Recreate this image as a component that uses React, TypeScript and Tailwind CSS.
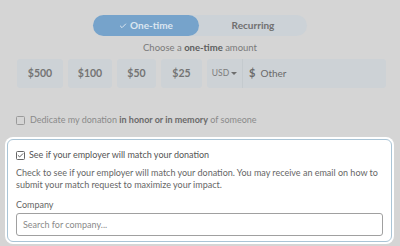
import { Check } from "lucide-react";

const amounts = [
  { label: "$500", w: "w-[46px]" },
  { label: "$100", w: "w-[44px]" },
  { label: "$50", w: "w-[39px]" },
  { label: "$25", w: "w-[41px]" },
];

export default function App() {
  return (
    <div className="w-[400px] h-[246px] overflow-hidden bg-[#d5d5d5] font-['Lato',sans-serif] text-[#6e6e6e]">
      {/* frequency toggle */}
      <div className="flex justify-center pt-[15px]">
        <div className="flex h-[21px] w-[214px] rounded-full bg-[#ccd2d7]">
          <div className="flex w-[106px] items-center justify-center gap-[3px] rounded-full bg-[#76a3cb] text-[10px] font-bold text-[#dbe6f0]">
            <Check size={8} strokeWidth={3} />
            One-time
          </div>
          <div className="flex flex-1 items-center justify-center text-[10px] font-bold text-[#707070]">
            Recurring
          </div>
        </div>
      </div>

      <p className="mt-[6px] text-center text-[9.5px] leading-[12px] text-[#7a7a7a]">
        Choose a <span className="font-bold text-[#5e5e5e]">one-time</span> amount
      </p>

      {/* amounts */}
      <div className="mt-[5px] flex gap-[5px] pl-[17px]">
        {amounts.map((a) => (
          <div
            key={a.label}
            className={`${a.w} flex h-[29px] items-center justify-center rounded-[3px] bg-[#cdd2d6] text-[10.5px] font-bold text-[#747474]`}
          >
            {a.label}
          </div>
        ))}
        <div className="flex h-[29px] w-[179px] rounded-[3px] bg-[#cdd2d6]">
          <div className="flex w-[36px] items-center justify-center gap-[2px] border-r border-[#c4cace] text-[8.5px] text-[#7c7c7c]">
            USD
            <span className="h-0 w-0 border-x-[3px] border-t-[3px] border-x-transparent border-t-[#6e6e6e]" />
          </div>
          <div className="flex items-center pl-[6px] text-[10px] text-[#6a6a6a]">
            <span className="text-[11px] font-bold">$</span>
            <span className="ml-[5px]">Other</span>
          </div>
        </div>
      </div>

      {/* dedicate */}
      <div className="mt-[26px] flex items-center pl-[16px] text-[9px] leading-[12px] text-[#8a8a8a]">
        <div className="h-[9px] w-[9px] rounded-[1.5px] border border-[#9a9a9a]" />
        <span className="ml-[5px]">
          Dedicate my donation <span className="font-bold text-[#6a6a6a]">in honor or in memory</span> of someone
        </span>
      </div>

      {/* employer match card */}
      <div className="ml-[5px] mt-[11px] w-[389px] rounded-[8px] bg-white p-[2px]">
        <div className="rounded-[6px] border border-[#a9c4d6] bg-white pb-[5px] pl-[8px] pr-[6px] pt-[9px] text-[#555]">
          <div className="flex items-center text-[9px] leading-[12px]">
            <div className="flex h-[9px] w-[9px] items-center justify-center rounded-[1.5px] border border-[#666]">
              <Check size={7} strokeWidth={3} className="text-[#444]" />
            </div>
            <span className="ml-[4px]">See if your employer will match your donation</span>
          </div>
          <p className="mt-[6px] text-[9px] leading-[12px] text-[#666]">
            Check to see if your employer will match your donation. You may receive an email on how to
            submit your match request to maximize your impact.
          </p>
          <p className="mt-[8px] text-[9px] leading-[12px] text-[#666]">Company</p>
          <div className="mt-[2px] mr-[2px] flex h-[23px] items-center rounded-[3px] border border-[#a0a0a0] pl-[6px] text-[9px] text-[#8a8a8a]">
            Search for company...
          </div>
        </div>
      </div>
    </div>
  );
}
